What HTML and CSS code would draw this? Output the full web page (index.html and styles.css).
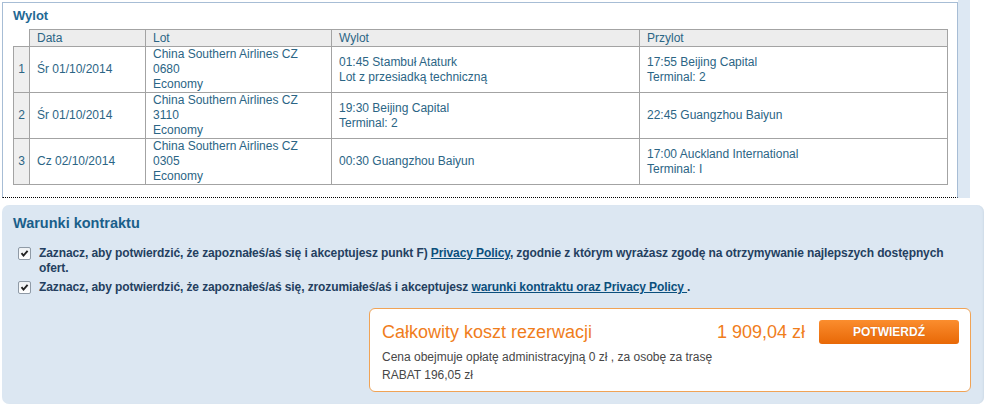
FILE: index.html
```html
<!DOCTYPE html>
<html lang="pl">
<head>
<meta charset="utf-8">
<title>Rezerwacja – podsumowanie</title>
<link rel="stylesheet" href="styles.css">
</head>
<body>
<div class="top-row">
  <section class="flight-panel">
    <h2 class="panel-title">Wylot</h2>
    <table class="flights">
      <colgroup>
        <col class="c-idx"><col class="c-date"><col class="c-flight"><col class="c-dep"><col class="c-arr">
      </colgroup>
      <thead>
        <tr>
          <th class="idx-head"></th>
          <th>Data</th>
          <th>Lot</th>
          <th>Wylot</th>
          <th>Przylot</th>
        </tr>
      </thead>
      <tbody>
        <tr>
          <td class="idx">1</td>
          <td>Śr 01/10/2014</td>
          <td>China Southern Airlines CZ<br>0680<br>Economy</td>
          <td>01:45 Stambuł Ataturk<br>Lot z przesiadką techniczną</td>
          <td>17:55 Beijing Capital<br>Terminal: 2</td>
        </tr>
        <tr>
          <td class="idx">2</td>
          <td>Śr 01/10/2014</td>
          <td>China Southern Airlines CZ<br>3110<br>Economy</td>
          <td>19:30 Beijing Capital<br>Terminal: 2</td>
          <td>22:45 Guangzhou Baiyun</td>
        </tr>
        <tr>
          <td class="idx">3</td>
          <td>Cz 02/10/2014</td>
          <td>China Southern Airlines CZ<br>0305<br>Economy</td>
          <td>00:30 Guangzhou Baiyun</td>
          <td>17:00 Auckland International<br>Terminal: I</td>
        </tr>
      </tbody>
    </table>
  </section>
  <div class="side-strip"></div>
</div>

<section class="terms-panel">
  <h2 class="terms-title">Warunki kontraktu</h2>
  <div class="consent">
    <span class="check"><svg viewBox="0 0 11 11" width="11" height="11"><path d="M2.5 5.2 L4.5 7.5 L8.6 2.8" fill="none" stroke="#222" stroke-width="1.9"/></svg></span>
    <p>Zaznacz, aby potwierdzić, że zapoznałeś/aś się i akceptujesz punkt F) <a href="#">Privacy Policy</a>, zgodnie z którym wyrażasz zgodę na otrzymywanie najlepszych dostępnych ofert.</p>
  </div>
  <div class="consent">
    <span class="check"><svg viewBox="0 0 11 11" width="11" height="11"><path d="M2.5 5.2 L4.5 7.5 L8.6 2.8" fill="none" stroke="#222" stroke-width="1.9"/></svg></span>
    <p>Zaznacz, aby potwierdzić, że zapoznałeś/aś się, zrozumiałeś/aś i akceptujesz <a href="#">warunki kontraktu oraz Privacy Policy </a>.</p>
  </div>

  <div class="total-box">
    <div class="total-row">
      <span class="total-label">Całkowity koszt rezerwacji</span>
      <span class="total-price">1 909,04 zł</span>
      <button class="confirm-btn" type="button">POTWIERDŹ</button>
    </div>
    <p class="total-note">Cena obejmuje opłatę administracyjną 0 zł , za osobę za trasę<br>RABAT 196,05 zł</p>
  </div>
</section>
</body>
</html>
```

FILE: styles.css
```css
* { box-sizing: border-box; }

html, body {
  margin: 0;
  padding: 0;
  background: #fff;
  font-family: "Liberation Sans", Arial, sans-serif;
  font-size: 12px;
}

/* flight list */
.top-row {
  display: flex;
  align-items: flex-start;
}

.flight-panel {
  width: 956px;
  height: 196px;
  margin: 2px 0 0 2px;
  padding: 5px 0 0 10px;
  border: 1px solid #a7bdd5;
  border-bottom: 1px dotted #000;
  background: #fff;
}

.side-strip {
  width: 12px;
  height: 198px;
  background: #dde8f3;
}

.panel-title {
  margin: 0 0 5px;
  font-size: 13px;
  line-height: 16px;
  font-weight: bold;
  color: #1f6995;
}

.flights {
  border-collapse: collapse;
  table-layout: fixed;
  width: 934px;
  color: #2b6585;
  font-size: 12px;
  line-height: 15px;
}

.c-idx { width: 16px; }
.c-date { width: 116px; }
.c-flight { width: 186px; }
.c-dep { width: 308px; }
.c-arr { width: 308px; }

.flights th {
  height: 17px;
  padding: 0 0 0 7px;
  text-align: left;
  font-weight: normal;
  background: #ededed;
  border: 1px solid #a3a3a3;
}

.flights th.idx-head {
  background: transparent;
  border: none;
  border-bottom: 1px solid #a3a3a3;
}

.flights td {
  height: 46px;
  padding: 0 0 0 7px;
  vertical-align: middle;
  border: 1px solid #a3a3a3;
  white-space: nowrap;
}

.flights td.idx {
  padding: 0;
  text-align: center;
  background: #efefef;
}

/* contract terms */
.terms-panel {
  width: 982px;
  height: 199px;
  margin: 7px 0 0 2px;
  padding: 9px 0 0 11px;
  background: #dce7f2;
  border-radius: 7px;
  box-shadow: inset -2px 0 2px -1px #cfdbe7;
}

.terms-title {
  margin: 0 0 14px;
  font-size: 14.5px;
  line-height: 18px;
  font-weight: bold;
  color: #1a5f8a;
}

.consent {
  display: flex;
  align-items: flex-start;
  margin-bottom: 4px;
}

.check {
  flex: none;
  width: 13px;
  height: 13px;
  margin: 1px 8px 0 5px;
  border: 1px solid #8f9aa6;
  border-radius: 2px;
  background: linear-gradient(#eef1f4, #fff);
  display: flex;
  align-items: center;
  justify-content: center;
}

.consent p {
  margin: 0;
  width: 925px;
  font-size: 12px;
  line-height: 15px;
  font-weight: bold;
  letter-spacing: -0.1px;
  color: #243f60;
}

.consent a {
  color: #0b4f7c;
  text-decoration: underline;
}

/* total */
.total-box {
  width: 602px;
  height: 84px;
  margin: 13px 0 0 356px;
  padding: 10px 11px 0 12px;
  background: #fff;
  border: 1px solid #f0a356;
  border-radius: 6px;
}

.total-row {
  display: flex;
  align-items: center;
  height: 26px;
}

.total-label {
  flex: 1;
  font-size: 18px;
  color: #f07d1c;
}

.total-price {
  margin-right: 14px;
  font-size: 18px;
  color: #f07d1c;
}

.confirm-btn {
  width: 140px;
  height: 24px;
  padding: 0;
  border: none;
  border-radius: 3px;
  background: linear-gradient(#fb8d2e, #e86806);
  color: #fff;
  font-family: "Liberation Sans", Arial, sans-serif;
  font-size: 12px;
  font-weight: bold;
  text-shadow: 0 0 1px rgba(160, 60, 0, 0.5);
}

.total-note {
  margin: 3px 0 0;
  font-size: 12px;
  line-height: 18px;
  color: #474747;
}
```
